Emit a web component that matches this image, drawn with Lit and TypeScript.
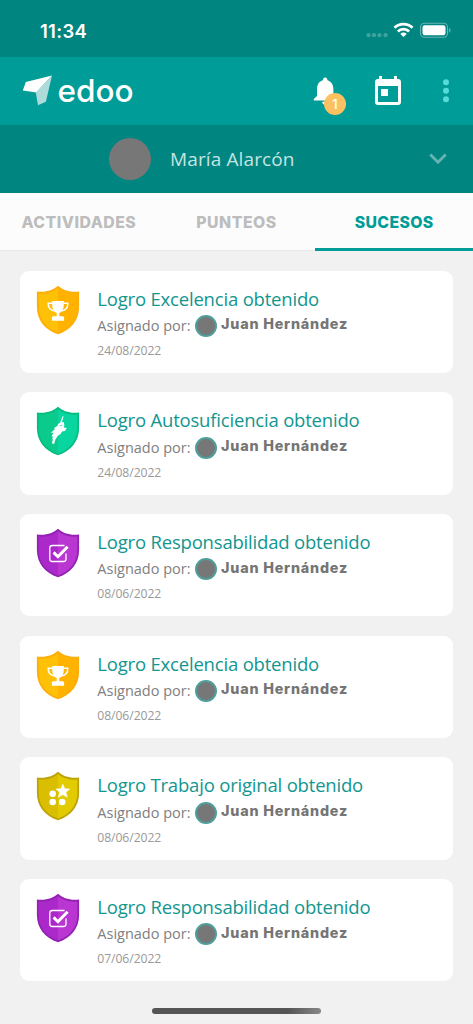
import { LitElement, html, svg, css } from 'lit';
import { customElement, property } from 'lit/decorators.js';

type Badge = 'trophy' | 'hero' | 'check' | 'stars';

interface Achievement {
  badge: Badge;
  title: string;
  date: string;
}

const ITEMS: Achievement[] = [
  { badge: 'trophy', title: 'Logro Excelencia obtenido', date: '24/08/2022' },
  { badge: 'hero', title: 'Logro Autosuficiencia obtenido', date: '24/08/2022' },
  { badge: 'check', title: 'Logro Responsabilidad obtenido', date: '08/06/2022' },
  { badge: 'trophy', title: 'Logro Excelencia obtenido', date: '08/06/2022' },
  { badge: 'stars', title: 'Logro Trabajo original obtenido', date: '08/06/2022' },
  { badge: 'check', title: 'Logro Responsabilidad obtenido', date: '07/06/2022' },
];

// edge, left half, right half
const COLORS: Record<Badge, [string, string, string]> = {
  trophy: ['#fdae08', '#ffc107', '#ffb300'],
  hero: ['#06bd80', '#0acb8b', '#09d5a0'],
  check: ['#9222b0', '#ab28cb', '#b936d3'],
  stars: ['#bda307', '#d9be02', '#e2cb00'],
};

const GLYPHS = {
  trophy: svg`
    <path d="M16.200 16H27.800V20c0 4.300-1.900 7-4.500 8v3.200h3.300c.9 0 1.500.8 1.500 1.800v2.800H15.900v-2.800c0-1 .6-1.800 1.500-1.800h3.300V28C18.100 27 16.200 24.300 16.200 20z" fill="#fff"/>
    <path d="M16.500 18.300h-4.300c0 4.200 2.300 7.200 6.300 7.600M27.500 18.300h4.300c0 4.200-2.300 7.200-6.300 7.600" fill="none" stroke="#fff" stroke-width="1.500"/>`,
  hero: svg`
    <path d="M27.600 10.300l-1.600 5.800 2 .3.300 3.300-.6 1.800 3 .5-1.700 3.100-3 .3-1.600 2.800-2.300 1.200-2.700 4-1.300 4.600-2.300-.8 1.300-4.200-1.300.4 1.500-3.200-1.800.9 1.200-3.200 1-1.400-3 .4 4.300-4-1-1 3.300-2 .9-2.200 1.900-.9 2.600-6.500z" fill="#fff"/>
    <path d="M26.300 19l-2.800 1" stroke="#09c88d" stroke-width=".7"/>`,
  check: svg`
    <path d="M28.500 17.500H16.300a2.500 2.500 0 0 0-2.500 2.500v11a2.500 2.500 0 0 0 2.500 2.500h11.200a2.500 2.500 0 0 0 2.500-2.500V25.500" fill="none" stroke="#fff" stroke-width="1.300"/>
    <path d="M17.600 24.400l4.300 4.300 9.700-10" fill="none" stroke="#fff" stroke-width="3"/>`,
  stars: svg`
    <g fill="#fff"><circle cx="16.700" cy="22.800" r="3.300"/><circle cx="16.700" cy="31" r="3.300"/><circle cx="26.200" cy="31" r="3.300"/>
    <path d="M26.800 13.200l1.900 4.500 5 .4-3.800 3.200 1.300 4.900-4.400-2.600-4.400 2.600 1.300-4.900-3.800-3.200 5-.4z" stroke="#fff" stroke-width=".6" stroke-linejoin="round"/></g>`,
};

@customElement('shield-badge')
class ShieldBadge extends LitElement {
  @property() kind: Badge = 'trophy';
  static styles = css`
    :host { display: block; width: 44px; height: 50px; }
    svg { display: block; }
  `;
  render() {
    const [edge, left, right] = COLORS[this.kind];
    return html`<svg width="44" height="50" viewBox="0 0 44 50">
      <path d="M22 .8C17 5.300 9.500 7.800 .9 6.500V22C.9 35 9 45 22 49.300 35 45 43.100 35 43.100 22V6.500C34.500 7.800 27 5.300 22 .8z" fill=${edge}/>
      <path d="M22 3.200C16.500 7.500 10 9 2.700 8.600V22C2.700 34 10 43.300 22 47.400z" fill=${left}/>
      <path d="M22 3.200C27.500 7.500 34 9 41.300 8.600V22C41.300 34 34 43.300 22 47.400z" fill=${right}/>
      ${GLYPHS[this.kind]}
    </svg>`;
  }
}

@customElement('achievement-card')
class AchievementCard extends LitElement {
  @property({ attribute: false }) item!: Achievement;
  static styles = css`
    :host {
      display: flex; box-sizing: border-box; height: 102.400px; padding: 14.200px 16.300px 0;
      background: #fff; border-radius: 9px; font-family: 'Open Sans', sans-serif;
    }
    .body { padding-left: 17px; white-space: nowrap; }
    .title { font-size: 18.500px; line-height: 27px; letter-spacing: -.19px; color: #12968f; }
    .by { display: flex; align-items: center; height: 27.400px; font-size: 14.500px; color: #808080; }
    .avatar {
      box-sizing: border-box; width: 22px; height: 22px; margin: 1px 4.500px 0 4px;
      border-radius: 50%; background: #777; border: 2px solid #4f9e9b;
    }
    .name { font: 800 14.300px Inter, sans-serif; letter-spacing: .8px; color: #757575; padding-bottom: 3px; }
    .date { font-size: 12.200px; line-height: 23px; letter-spacing: -.08px; color: #999; }
  `;
  render() {
    return html`
      <shield-badge .kind=${this.item.badge}></shield-badge>
      <div class="body">
        <div class="title">${this.item.title}</div>
        <div class="by"><span class="label">Asignado por:</span><span class="avatar"></span><span class="name">Juan Hernández</span></div>
        <div class="date">${this.item.date}</div>
      </div>`;
  }
}

@customElement('app-root')
class AppRoot extends LitElement {
  static styles = css`
    :host {
      display: flex; flex-direction: column; box-sizing: border-box; height: 1024px;
      background: #f1f1f1; overflow: hidden; font-family: 'Open Sans', sans-serif;
    }
    svg { display: block; }
    .status {
      height: 57px; flex: none; box-sizing: border-box; background: #008580; color: #fff;
      display: flex; align-items: center; padding: 4px 22px 0 40px;
    }
    .time { flex: 1; font: 600 18.500px Inter, sans-serif; letter-spacing: .3px; }
    .appbar {
      height: 68px; flex: none; box-sizing: border-box; background: #009c97; color: #fff;
      display: flex; align-items: center; padding: 0 24px 0 22px;
    }
    .brand { flex: 1; padding: 0 0 1px 4.500px; font: 550 31.500px/40px Inter, sans-serif; }
    .bell { position: relative; }
    .count {
      position: absolute; left: 11.500px; top: 16px; width: 22px; height: 22px; border-radius: 50%;
      background: #fdc161; font: 500 13px/22px Inter, sans-serif; text-align: center;
    }
    .calendar { margin: -2px 0 0 38.500px; }
    .more { margin-left: 42px; }
    .user {
      height: 68px; flex: none; box-sizing: border-box; background: #008580;
      display: flex; align-items: center; padding: 0 26px 0 109px;
    }
    .photo { width: 42px; height: 42px; border-radius: 50%; background: #777; }
    .person { flex: 1; padding: 0 0 1px 19px; font-size: 19px; color: #c5e4e2; letter-spacing: .12px; }
    .tabs {
      height: 58px; flex: none; box-sizing: border-box; display: grid; grid-template-columns: repeat(3, 1fr);
      background: #fcfcfc; border-bottom: 1px solid #e9e9e9;
      font: 800 15.800px Inter, sans-serif; letter-spacing: .5px; color: #bdbdbd;
    }
    .tab { display: flex; align-items: center; justify-content: center; padding-top: 2px; }
    .active { color: #009c97; letter-spacing: .35px; box-shadow: inset 0 -2px #009c97, 0 1px #009c97; }
    .list { display: flex; flex-direction: column; gap: 19.270px; padding: 19.600px 20px 0; }
    .home { width: 169px; height: 6px; margin: 26.500px auto 0; border-radius: 3px; flex: none; background: linear-gradient(100deg, #555 80%, #888); }
  `;
  render() {
    return html`
      <div class="status">
        <div class="time">11:34</div>
        <svg width="86" height="18" viewBox="0 0 86 18" fill="none">
          <g fill="#3da39e"><circle cx="3.500" cy="13.200" r="2.100"/><circle cx="9" cy="13.200" r="2.100"/><circle cx="14.500" cy="13.200" r="2.100"/><circle cx="20.500" cy="13.200" r="2.100"/></g>
          <g stroke="#fff" stroke-width="2.800"><path d="M29.500 5.800a13 13 0 0 1 18 0"/><path d="M32.900 9.500a8 8 0 0 1 11.200 0"/></g>
          <path d="M38.500 15l-3.200-3.100a4.600 4.600 0 0 1 6.400 0z" fill="#fff"/>
          <rect x="55.500" y="1.300" width="27" height="14" rx="4" stroke="#66b5b2" stroke-width="1.100"/>
          <rect x="57.500" y="3.300" width="23" height="10" rx="2.200" fill="#fff"/>
          <path d="M84 6c2 .8 2 3.800 0 4.600z" fill="#66b5b2"/>
        </svg>
      </div>
      <div class="appbar">
        <svg width="31" height="32" viewBox="0 0 31 32">
          <path d="M30 .500L3.800 7 .8 15.500l13.500 2z" fill="#fff"/>
          <path d="M30 .500L13.800 17.500l2.200 12.700 7.900-3.500z" fill="#addbd9"/>
        </svg>
        <div class="brand">edoo</div>
        <div class="bell">
          <svg width="24" height="28" viewBox="0 0 24 28" fill="#fff">
            <path d="M12.200 0.500a2.200 2.200 0 0 0-2.200 2.200v.6C6 4.200 4 7.700 4 12v7L.8 22v1.500h22.400V22l-2.800-3v-7c0-4.300-2.400-7.800-6-8.700v-.6A2.200 2.200 0 0 0 12.200 .5zM9.200 24.700h5.600a2.800 2.800 0 0 1-5.600 0z"/>
          </svg>
          <span class="count">1</span>
        </div>
        <svg class="calendar" width="26" height="29" viewBox="0 0 26 29" fill="#fff">
          <path fill-rule="evenodd" d="M4 0h3v3h12V0h3v3h1a3 3 0 0 1 3 3v20a3 3 0 0 1-3 3H3a3 3 0 0 1-3-3V6a3 3 0 0 1 3-3h1zM3 10v16h20V10zM6 13h7v7H6z"/>
        </svg>
        <svg class="more" width="6" height="24" viewBox="0 0 6 24" fill="#57dbd6"><circle cx="3" cy="3.200" r="3"/><circle cx="3" cy="11.700" r="3"/><circle cx="3" cy="20.200" r="3"/></svg>
      </div>
      <div class="user">
        <div class="photo"></div>
        <div class="person">María Alarcón</div>
        <svg width="18" height="12" viewBox="0 0 18 12"><path d="M1.300 1.500L9 9.200l7.700-7.700" fill="none" stroke="#66b5b2" stroke-width="2.800"/></svg>
      </div>
      <div class="tabs">
        <div class="tab">ACTIVIDADES</div><div class="tab">PUNTEOS</div><div class="tab active">SUCESOS</div>
      </div>
      <div class="list">${ITEMS.map((item) => html`<achievement-card .item=${item}></achievement-card>`)}</div>
      <div class="home"></div>`;
  }
}
